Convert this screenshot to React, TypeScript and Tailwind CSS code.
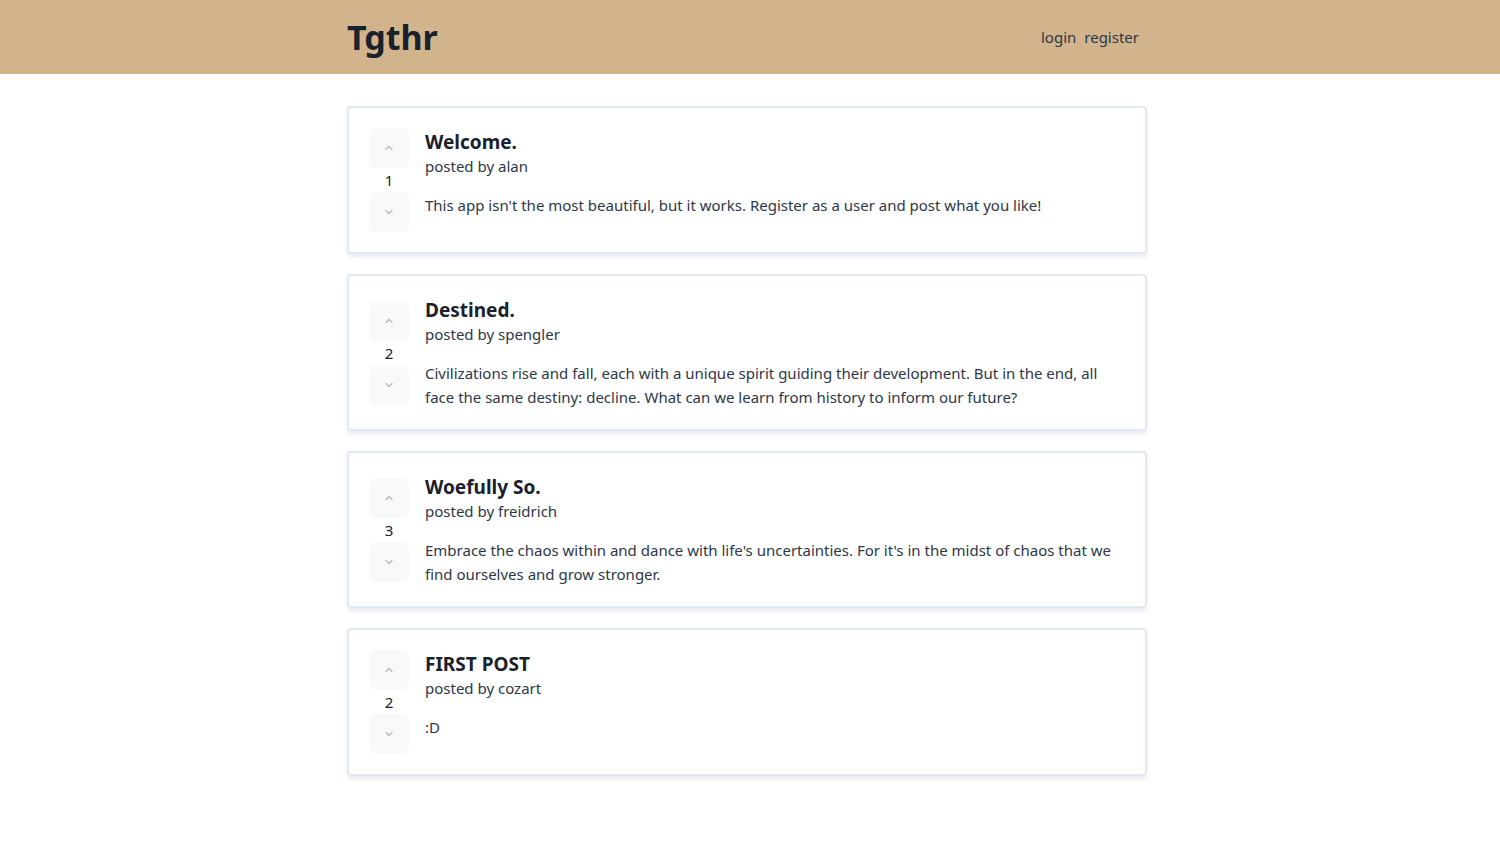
import React from "react";

type Post = { title: string; author: string; body: string; votes: number };

const posts: Post[] = [
  {
    title: "Welcome.",
    author: "alan",
    body: "This app isn't the most beautiful, but it works. Register as a user and post what you like!",
    votes: 1,
  },
  {
    title: "Destined.",
    author: "spengler",
    body: "Civilizations rise and fall, each with a unique spirit guiding their development. But in the end, all face the same destiny: decline. What can we learn from history to inform our future?",
    votes: 2,
  },
  {
    title: "Woefully So.",
    author: "freidrich",
    body: "Embrace the chaos within and dance with life's uncertainties. For it's in the midst of chaos that we find ourselves and grow stronger.",
    votes: 3,
  },
  {
    title: "FIRST POST",
    author: "cozart",
    body: ":D",
    votes: 2,
  },
];

function Chevron({ up }: { up?: boolean }) {
  return (
    <svg width="10" height="10" viewBox="0 0 10 10" fill="none">
      <path
        d={up ? "M2 6.5 L5 3.5 L8 6.5" : "M2 3.5 L5 6.5 L8 3.5"}
        stroke="#b8bcc4"
        strokeWidth="1.4"
        strokeLinecap="round"
        strokeLinejoin="round"
      />
    </svg>
  );
}

function PostCard({ p }: { p: Post }) {
  return (
    <div className="mb-5 flex gap-4 rounded-[4px] border-2 border-[#e2e8f0] bg-white p-5 shadow-[0_3px_4px_rgba(160,170,190,0.25)]">
      <div className="flex w-10 shrink-0 flex-col items-center self-center">
        <button className="flex h-10 w-10 items-center justify-center rounded-md bg-[#f8f9fb]">
          <Chevron up />
        </button>
        <div className="h-6 text-[15px] leading-6 text-[#1a202c]">{p.votes}</div>
        <button className="flex h-10 w-10 items-center justify-center rounded-md bg-[#f8f9fb]">
          <Chevron />
        </button>
      </div>
      <div className="min-w-0 flex-1 self-start">
        <h2 className="text-[19px] font-bold leading-7 text-[#1a202c]">{p.title}</h2>
        <div className="text-[15px] leading-[21px] text-[#2d3748]">posted by {p.author}</div>
        <p className="mt-4 text-[15px] leading-6 text-[#2d3748]">{p.body}</p>
      </div>
    </div>
  );
}

export default function App() {
  return (
    <div className="min-h-screen bg-white" style={{ fontFamily: '"Noto Sans", "Open Sans", sans-serif' }}>
      <header className="h-[74px] bg-[#d2b48c] pr-[6px]">
        <div className="mx-auto flex h-full w-[800px] items-center justify-between pr-2">
          <h1 className="text-[34px] font-bold leading-none text-[#1a202c]">Tgthr</h1>
          <nav className="flex gap-2 text-[15px] text-[#2d3748]">
            <a>login</a>
            <a>register</a>
          </nav>
        </div>
      </header>
      <div className="pr-[6px]">
        <main className="mx-auto mt-8 w-[800px]">
          {posts.map((p) => (
            <PostCard key={p.title} p={p} />
          ))}
        </main>
      </div>
    </div>
  );
}
